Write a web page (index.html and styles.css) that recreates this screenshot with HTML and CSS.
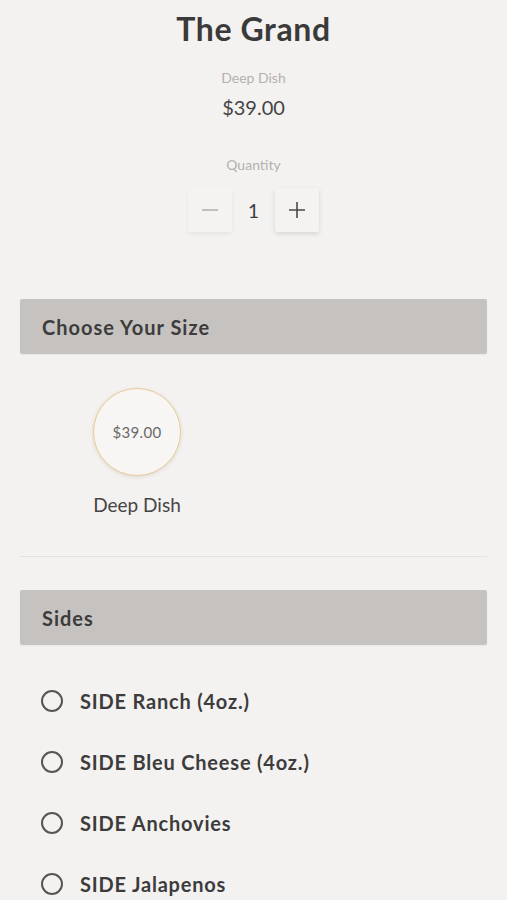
FILE: index.html
```html
<!DOCTYPE html>
<html>
<head>
<meta charset="utf-8">
<link rel="stylesheet" href="styles.css">
</head>
<body>
<div class="page">
  <div class="top">
    <h1 class="title">The Grand</h1>
    <div class="sub">Deep Dish</div>
    <div class="price">$39.00</div>
    <div class="qty-label">Quantity</div>
    <div class="qty">
      <div class="qbtn minus"><svg width="18" height="18" viewBox="0 0 18 18"><path d="M1 9h16" stroke="#b5b3b1" stroke-width="1.6"/></svg></div>
      <div class="qnum">1</div>
      <div class="qbtn plus"><svg width="18" height="18" viewBox="0 0 18 18"><path d="M1 9h16M9 1v16" stroke="#4a4a4a" stroke-width="1.6"/></svg></div>
    </div>
  </div>

  <div class="section-head">Choose Your Size</div>
  <div class="sizes">
    <div class="size">
      <div class="size-circle">$39.00</div>
      <div class="size-name">Deep Dish</div>
    </div>
  </div>
  <div class="divider"></div>

  <div class="section-head sides-head">Sides</div>
  <ul class="options">
    <li class="option"><span class="radio"></span><span class="opt-label">SIDE Ranch (4oz.)</span></li>
    <li class="option"><span class="radio"></span><span class="opt-label">SIDE Bleu Cheese (4oz.)</span></li>
    <li class="option"><span class="radio"></span><span class="opt-label">SIDE Anchovies</span></li>
    <li class="option"><span class="radio"></span><span class="opt-label">SIDE Jalapenos</span></li>
  </ul>
</div>
</body>
</html>
```

FILE: styles.css
```css
html, body {
  margin: 0;
  padding: 0;
  background: #f4f2f0;
}
body {
  font-family: "Lato", "Noto Sans", sans-serif;
  color: #3c3c3c;
  height: 900px;
  overflow: hidden;
}
.page {
  padding: 0 20px;
}
.top {
  display: flex;
  flex-direction: column;
  align-items: center;
}
.title {
  margin: 11px 0 0;
  font-size: 32px;
  line-height: 36px;
  font-weight: 700;
  color: #3a3a3a;
  letter-spacing: 0.6px;
}
.sub {
  margin-top: 23px;
  font-size: 14px;
  line-height: 16px;
  color: #b3b1af;
}
.price {
  margin-top: 9px;
  font-size: 20px;
  line-height: 24px;
  color: #454545;
}
.qty-label {
  margin-top: 38px;
  font-size: 14px;
  line-height: 16px;
  color: #b3b1af;
}
.qty {
  margin-top: 15px;
  display: flex;
  align-items: center;
}
.qbtn {
  width: 44px;
  height: 44px;
  display: flex;
  align-items: center;
  justify-content: center;
  background: #f5f3f1;
  border-radius: 2px;
  box-shadow: 0 2px 5px rgba(0,0,0,0.12);
}
.qbtn.minus {
  box-shadow: 0 2px 4px rgba(0,0,0,0.06);
}
.qnum {
  width: 43px;
  text-align: center;
  font-size: 19px;
  color: #3a3a3a;
}
.section-head {
  margin-top: 67px;
  height: 55px;
  background: #c6c2c0;
  border-radius: 2px;
  display: flex;
  align-items: center;
  padding-left: 22px;
  font-size: 20px;
  font-weight: 700;
  letter-spacing: 1px;
  color: #3c3c3c;
  box-shadow: 0 1px 2px rgba(0,0,0,0.05);
}
.sizes {
  display: flex;
  padding-left: 73px;
  margin-top: 34px;
}
.size {
  display: flex;
  flex-direction: column;
  align-items: center;
}
.size-circle {
  width: 86px;
  height: 86px;
  border-radius: 50%;
  border: 1.5px solid #e9cb8f;
  background: #f8f6f4;
  box-shadow: 0 1px 4px rgba(0,0,0,0.1);
  display: flex;
  align-items: center;
  justify-content: center;
  font-size: 15px;
  letter-spacing: 0.3px;
  color: #6a6a6a;
}
.size-name {
  margin-top: 17px;
  font-size: 19px;
  line-height: 24px;
  color: #454545;
}
.divider {
  margin-top: 39px;
  height: 1px;
  background: #e4e1df;
}
.sides-head {
  margin-top: 33px;
}
.options {
  list-style: none;
  margin: 25px 0 0;
  padding: 0 0 0 21px;
}
.option {
  display: flex;
  align-items: center;
  height: 61px;
}
.radio {
  width: 18px;
  height: 18px;
  border: 2px solid #555;
  border-radius: 50%;
  flex: none;
}
.opt-label {
  margin-left: 17px;
  font-size: 20px;
  font-weight: 700;
  letter-spacing: 0.8px;
  color: #3c3c3c;
}
```
